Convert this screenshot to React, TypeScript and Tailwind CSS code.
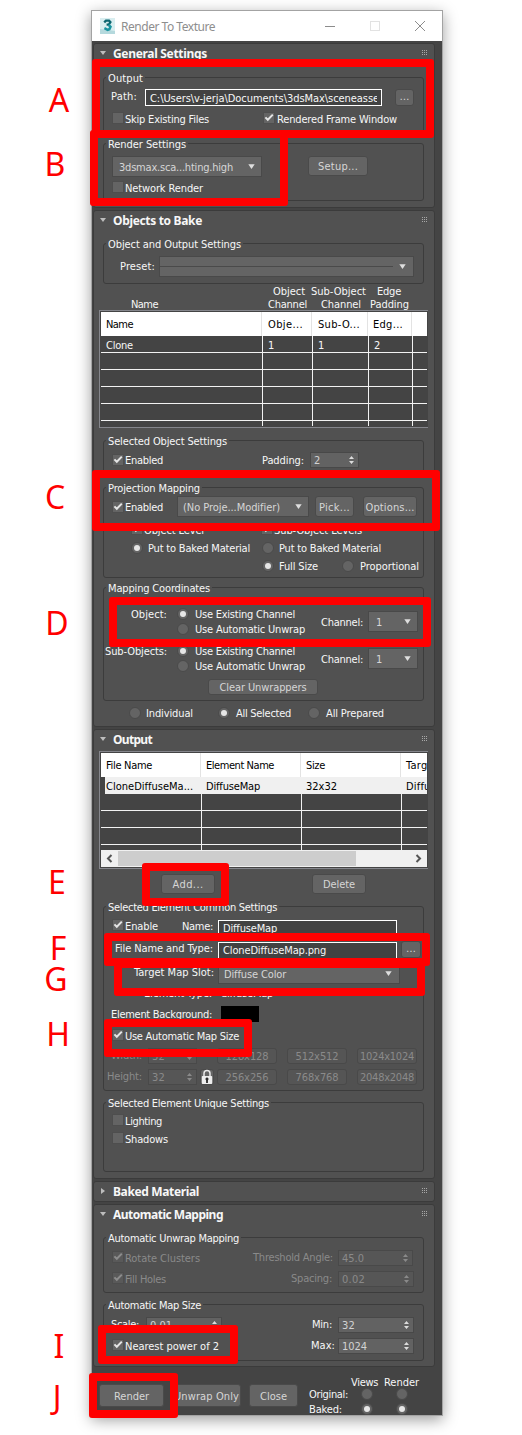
import { useLayoutEffect, useRef, type ReactNode } from "react";

/* Text that spreads its letters evenly over the width of its box. */
function T({ c = "", children }: { c?: string; children: string }) {
  const box = useRef<HTMLSpanElement>(null);
  const ink = useRef<HTMLSpanElement>(null);
  useLayoutEffect(() => {
    if (!box.current || !ink.current) return;
    ink.current.style.letterSpacing = "0px";
    const gap = box.current.getBoundingClientRect().width - ink.current.getBoundingClientRect().width;
    ink.current.style.letterSpacing = `${gap / children.length}px`;
  }, [children]);
  return (
    <span ref={box} className={`block h-[14px] shrink-0 whitespace-nowrap leading-[16px] ${c}`}>
      <span ref={ink} className="inline-block">{children}</span>
    </span>
  );
}

function Row({ c, children }: { c: string; children: ReactNode }) {
  return <div className={`flex shrink-0 items-start ${c}`}>{children}</div>;
}

function Check({ c = "", on, off }: { c?: string; on?: boolean; off?: boolean }) {
  return (
    <span className={`flex size-[12px] shrink-0 items-center justify-center border ${off ? "border-[#4d4d4d] bg-[#595959]" : "border-[#4e4e4e] bg-[#646464]"} ${c}`}>
      {on && (
        <svg width="10" height="10" viewBox="0 0 10 10" className="shrink-0">
          <path d="M1.4 4.4 L3.8 6.8 L8.8 1.6" fill="none" stroke={off ? "#8c8c8c" : "#e4e4e4"} strokeWidth="2" />
        </svg>
      )}
    </span>
  );
}

function Radio({ c = "", on }: { c?: string; on?: boolean }) {
  return (
    <span className={`flex size-[12px] shrink-0 items-center justify-center rounded-full border border-[#4a4a4a] bg-[#646464] ${c}`}>
      {on && <span className="size-[6px] rounded-full bg-[#e6e6e6]" />}
    </span>
  );
}

function Caret() {
  return (
    <svg width="7" height="5" viewBox="0 0 7 5" className="shrink-0">
      <path d="M0.3 0.3 H6.7 L3.5 5 Z" fill="#dedede" />
    </svg>
  );
}

function Drop({ c, children }: { c: string; children?: ReactNode }) {
  return (
    <span className={`flex h-[21px] shrink-0 items-center justify-between border border-[#494949] bg-[#646464] text-[#d6d6d6] ${c}`}>
      {children}
      <Caret />
    </span>
  );
}

function Spin({ c, off, children }: { c: string; off?: boolean; children: ReactNode }) {
  return (
    <span className={`flex h-[16px] shrink-0 items-center justify-between border pl-[3px] pr-[4px] ${off ? "border-[#494949] bg-[#565656] text-[#8a8a8a]" : "border-[#484848] bg-[#626262] text-[#d2d2d2]"} ${c}`}>
      {children}
      <svg width="5" height="8" viewBox="0 0 5 8" className="shrink-0">
        <path d="M0 3 L2.5 0 L5 3 Z M0 5 L2.5 8 L5 5 Z" fill={off ? "#8a8a8a" : "#dcdcdc"} />
      </svg>
    </span>
  );
}

function Btn({ c, off, children }: { c: string; off?: boolean; children: ReactNode }) {
  return (
    <span className={`flex shrink-0 items-center justify-center rounded-[3px] border ${off ? "border-[#494949] bg-[#555555] text-[#8a8a8a]" : "border-[#4a4a4a] bg-[#646464] text-[#d6d6d6]"} ${c}`}>
      {children}
    </span>
  );
}

function Field({ c, children }: { c: string; children: ReactNode }) {
  return (
    <span className={`flex h-[17px] shrink-0 overflow-hidden border border-white bg-[#424242] pl-[4px] ${c}`}>
      {children}
    </span>
  );
}

function Group({ c, title, w, children }: { c: string; title: string; w: string; children?: ReactNode }) {
  return (
    <div className={`ml-[9px] flex w-[321px] shrink-0 flex-col rounded-[3px] border border-[#3c3c3c] ${c}`}>
      <div className="-mt-[7px] ml-[2px] h-[14px] w-fit shrink-0 bg-[#515151] px-[2px]">
        <T c={w}>{title}</T>
      </div>
      {children}
    </div>
  );
}

function Panel({ c, title, w, closed, children }: { c: string; title: string; w: string; closed?: boolean; children?: ReactNode }) {
  return (
    <section className={`flex w-[342px] shrink-0 flex-col overflow-hidden rounded-[3px] border border-[#3b3b3b] bg-[#515151] ${c}`}>
      <div className="flex h-[19px] shrink-0 items-start">
        <svg width="6" height="6" viewBox="0 0 6 6" className="ml-[6px] mt-[6px] shrink-0">
          <path d={closed ? "M1 0 L5 3 L1 6 Z" : "M0 1 H6 L3 5 Z"} fill="#bdbdbd" />
        </svg>
        <T c={`ml-[7px] mt-[2px] font-['Noto_Sans',sans-serif] text-[12px] font-bold [font-stretch:normal] ${w}`}>{title}</T>
        <svg width="5" height="5" viewBox="0 0 5 5" className="ml-auto mr-[7px] mt-[6px] shrink-0">
          {[0, 2, 4].map((y) => [0, 2, 4].map((x) => <rect key={`${x}${y}`} x={x} y={y} width="1" height="1" fill="#a8a8a8" />))}
        </svg>
      </div>
      {children}
    </section>
  );
}

const frames = [
  "left-[92px] top-[59px] w-[342px] h-[79px]",
  "left-[90px] top-[130px] w-[198px] h-[76px]",
  "left-[92px] top-[470px] w-[348px] h-[61px]",
  "left-[109px] top-[597px] w-[322px] h-[50px]",
  "left-[142px] top-[863px] w-[87px] h-[43px]",
  "left-[104px] top-[933px] w-[326px] h-[33px]",
  "left-[114px] top-[960px] w-[311px] h-[36px]",
  "left-[104px] top-[1019px] w-[148px] h-[38px]",
  "left-[98px] top-[1325px] w-[140px] h-[39px]",
  "left-[89px] top-[1373px] w-[89px] h-[45px]",
];

const letters: [string, string][] = [
  ["A", "left-[39px] top-[85px]"],
  ["B", "left-[35px] top-[149px]"],
  ["C", "left-[35px] top-[482px]"],
  ["D", "left-[37px] top-[608px]"],
  ["E", "left-[37px] top-[867px]"],
  ["F", "left-[38px] top-[933px]"],
  ["G", "left-[36px] top-[964px]"],
  ["H", "left-[38px] top-[1019px]"],
  ["I", "left-[39px] top-[1331px]"],
  ["J", "left-[37px] top-[1382px]"],
];

function MapCoord({ label, w, ml, c }: { label: string; w: string; ml: string; c: string }) {
  return (
    <Row c={c}>
      <T c={`mt-[1px] ${ml} ${w}`}>{label}</T>
      <div className="ml-[10px] w-[144px]">
        <Row c="h-[15px]"><Radio c="mt-[2px]" on /><T c="ml-[6px] mt-[1px] w-[100px]">Use Existing Channel</T></Row>
        <Row c="h-[15px]"><Radio c="mt-[2px]" /><T c="ml-[6px] mt-[1px] w-[110px]">Use Automatic Unwrap</T></Row>
      </div>
      <T c="mt-[9px] w-[42px]">Channel:</T>
      <Drop c="ml-[5px] mt-[5px] w-[50px] pl-[7px] pr-[6px]"><T c="w-[7px]">1</T></Drop>
    </Row>
  );
}

export default function App() {
  return (
    <div className="relative h-[1435px] w-[522px] overflow-hidden bg-white pl-[91px] pt-[10px] font-['DejaVu_Sans_Condensed','DejaVu_Sans',sans-serif] text-[11px] text-[#f7f7f7] [font-stretch:condensed]">
      <div className="flex h-[1406px] w-[352px] flex-col overflow-hidden border border-[#a3a3a3] bg-[#444444] shadow-[0_4px_14px_rgba(0,0,0,0.38)]">
        <header className="flex h-[30px] shrink-0 items-center bg-white font-['Noto_Sans',sans-serif] text-[12px] text-[#8e8e8e] [font-stretch:normal]">
          <svg width="15" height="16" viewBox="0 0 15 16" className="ml-[8px] shrink-0">
            <path d="M0 0 H15 V16 H0 Z" fill="#d9eef0" />
            <path d="M0 11 L15 13 V16 H0 Z" fill="#b5d9dd" />
            <path d="M4.2 4.4 L6 2.6 H9 L10.4 4.2 L8.8 6.6 H6.6" fill="none" stroke="#0c6670" strokeWidth="2.3" />
            <path d="M8.6 6.8 L10.5 8.8 L9.4 11.2 L7.6 11.8 L4.4 10.2" fill="none" stroke="#1a94a0" strokeWidth="2.5" />
          </svg>
          <T c="ml-[6px] w-[94px]">Render To Texture</T>
          <svg width="100" height="12" viewBox="0 0 100 12" className="ml-auto mr-[17px] shrink-0">
            <path d="M0 6.5 H10" stroke="#8c8c8c" />
            <rect x="45.5" y="1.5" width="9" height="9" fill="none" stroke="#e2e2e2" />
            <path d="M90 1 L100 11 M100 1 L90 11" stroke="#8c8c8c" />
          </svg>
        </header>

        <main className="ml-[1px] flex shrink-0 flex-col">
          <Panel c="mt-[2px] h-[165px]" title="General Settings" w="w-[94px]">
            <Group c="mt-[14px] h-[57px]" title="Output" w="w-[35px]">
              <Row c="mt-[4px] h-[22px]">
                <T c="ml-[7px] w-[26px]">Path:</T>
                <Field c="ml-[8px] w-[237px] pt-[1px]">
                  <div className="flex w-[227px] overflow-hidden">
                    <T c="w-[223px]">{"C:\\Users\\v-jerja\\Documents\\3dsMax\\sceneass"}</T><span className="leading-[16px]">e</span>
                  </div>
                </Field>
                <Btn c="ml-[13px] h-[17px] w-[19px]">…</Btn>
              </Row>
              <Row c="h-[16px]">
                <Check c="ml-[8px] mt-[1px]" /><T c="ml-[1px] mt-[1px] w-[84px]">Skip Existing Files</T>
                <Check c="ml-[54px] mt-[1px]" on /><T c="ml-[2px] mt-[1px] w-[120px]">Rendered Frame Window</T>
              </Row>
            </Group>
            <Group c="mt-[9px] h-[58px]" title="Render Settings" w="w-[78px]">
              <Row c="mt-[5px] h-[25px]">
                <Drop c="ml-[8px] w-[150px] pl-[6px] pr-[6px]"><T c="w-[114px]">3dsmax.sca...hting.high</T></Drop>
                <Btn c="ml-[46px] h-[20px] w-[60px]"><T c="w-[40px]">Setup...</T></Btn>
              </Row>
              <Row c="h-[14px]"><Check c="ml-[8px]" /><T c="ml-[1px] w-[78px]">Network Render</T></Row>
            </Group>
          </Panel>

          <Panel c="mt-[2px] h-[517px]" title="Objects to Bake" w="w-[89px]">
            <Group c="mt-[13px] h-[41px]" title="Object and Output Settings" w="w-[133px]">
              <Row c="mt-[5px] h-[21px]">
                <T c="ml-[16px] mt-[3px] w-[35px]">Preset:</T>
                <Drop c="ml-[4px] w-[255px] pr-[7px]"><span className="h-px w-[233px] bg-[#4a4a4a]" /></Drop>
              </Row>
            </Group>
            <Row c="h-[12px]">
              <T c="ml-[179px] w-[32px]">Object</T><T c="ml-[6px] w-[55px]">Sub-Object</T><T c="ml-[11px] w-[24px]">Edge</T>
            </Row>
            <Row c="h-[14px]">
              <T c="ml-[37px] mt-[1px] w-[27px]">Name</T><T c="ml-[110px] mt-[1px] w-[39px]">Channel</T>
              <T c="ml-[14px] mt-[1px] w-[40px]">Channel</T><T c="ml-[9px] mt-[1px] w-[39px]">Padding</T>
            </Row>
            <div className="ml-[5px] flex h-[118px] w-[329px] shrink-0 flex-col border border-r-0 border-[#85868c] bg-[#444444] pl-[1px] pr-[1px] pt-[1px]">
              <div className="flex h-[24px] w-[326px] shrink-0 bg-white text-black">
                <div className="w-[161px] border-r border-[#e3e3e3] pl-[5px] pt-[5px]"><T c="w-[27px]">Name</T></div>
                <div className="w-[50px] border-r border-[#e3e3e3] pl-[6px] pt-[5px]"><T c="w-[35px]">Obje...</T></div>
                <div className="w-[56px] border-r border-[#e3e3e3] pl-[6px] pt-[5px]"><T c="w-[42px]">Sub-O...</T></div>
                <div className="w-[44px] border-r border-[#e3e3e3] pl-[5px] pt-[5px]"><T c="w-[30px]">Edg...</T></div>
              </div>
              {[["Clone", "1", "1", "2"], [], [], [], []].map((r, i) => (
                <div key={i} className="flex h-[17px] w-[326px] shrink-0 border-b border-[#f2f2f2]">
                  <div className="w-[162px] border-r border-[#f2f2f2] pl-[5px] pt-[2px]">{r[0] && <T c="w-[27px]">{r[0]}</T>}</div>
                  <div className="w-[50px] border-r border-[#f2f2f2] pl-[5px] pt-[2px]">{r[1] && <T c="w-[7px]">{r[1]}</T>}</div>
                  <div className="w-[56px] border-r border-[#f2f2f2] pl-[5px] pt-[2px]">{r[2] && <T c="w-[7px]">{r[2]}</T>}</div>
                  <div className="w-[44px] border-r border-[#f2f2f2] pl-[5px] pt-[2px]">{r[3] && <T c="w-[7px]">{r[3]}</T>}</div>
                </div>
              ))}
              <div className="flex h-[5px] w-[326px] shrink-0">
                <div className="w-[162px] border-r border-[#f2f2f2]" /><div className="w-[50px] border-r border-[#f2f2f2]" />
                <div className="w-[56px] border-r border-[#f2f2f2]" /><div className="w-[44px] border-r border-[#f2f2f2]" />
              </div>
            </div>
            <Group c="mt-[12px] h-[35px]" title="Selected Object Settings" w="w-[119px]">
              <Row c="mt-[4px] h-[18px]">
                <Check c="ml-[8px] mt-[2px]" on /><T c="ml-[1px] mt-[1px] w-[38px]">Enabled</T>
                <T c="ml-[99px] mt-[1px] w-[42px]">Padding:</T><Spin c="ml-[6px] w-[49px]"><T c="w-[7px]">2</T></Spin>
              </Row>
            </Group>
            <Group c="mt-[12px] h-[91px]" title="Projection Mapping" w="w-[92px]">
              <Row c="mt-[1px] h-[27px]">
                <Check c="ml-[8px] mt-[5px]" on /><T c="ml-[1px] mt-[4px] w-[38px]">Enabled</T>
                <Drop c="ml-[14px] w-[132px] pl-[5px] pr-[6px]"><T c="w-[97px]">(No Proje...Modifier)</T></Drop>
                <Btn c="ml-[6px] h-[21px] w-[39px]"><T c="w-[31px]">Pick...</T></Btn>
                <Btn c="ml-[9px] h-[21px] w-[54px]"><T c="w-[49px]">Options...</T></Btn>
              </Row>
              <Row c="h-[18px]">
                <Check c="ml-[27px]" on /><T c="ml-[1px] w-[60px]">Object Level</T>
                <Check c="ml-[57px]" on /><T c="ml-[1px] w-[88px]">Sub-Object Levels</T>
              </Row>
              <Row c="h-[18px]">
                <Radio c="ml-[27px] mt-[1px]" on /><T c="ml-[5px] w-[102px]">Put to Baked Material</T>
                <Radio c="ml-[12px] mt-[1px]" /><T c="ml-[5px] w-[102px]">Put to Baked Material</T>
              </Row>
              <Row c="h-[14px]">
                <Radio c="ml-[158px] mt-[1px]" on /><T c="ml-[5px] w-[39px]">Full Size</T>
                <Radio c="ml-[24px] mt-[1px]" /><T c="ml-[6px] w-[59px]">Proportional</T>
              </Row>
            </Group>
            <Group c="mt-[9px] h-[114px]" title="Mapping Coordinates" w="w-[102px]">
              <MapCoord c="mt-[11px] h-[37px]" label="Object:" ml="ml-[27px]" w="w-[36px]" />
              <MapCoord c="h-[36px]" label="Sub-Objects:" ml="ml-[1px]" w="w-[62px]" />
              <Row c="h-[16px]"><Btn c="ml-[104px] h-[16px] w-[110px]"><T c="w-[87px]">Clear Unwrappers</T></Btn></Row>
            </Group>
            <Row c="mt-[5px] h-[14px]">
              <Radio c="ml-[35px] mt-[1px]" /><T c="ml-[5px] w-[47px]">Individual</T>
              <Radio c="ml-[25px] mt-[1px]" on /><T c="ml-[6px] w-[55px]">All Selected</T>
              <Radio c="ml-[17px] mt-[1px]" /><T c="ml-[6px] w-[58px]">All Prepared</T>
            </Row>
          </Panel>

          <Panel c="mt-[2px] h-[450px]" title="Output" w="w-[39px]">
            <div className="ml-[5px] mt-[2px] flex h-[118px] w-[329px] shrink-0 flex-col border border-r-0 border-[#85868c] bg-[#444444] pl-[1px] pr-[1px] pt-[1px]">
              <div className="flex h-[24px] w-[326px] shrink-0 overflow-hidden bg-white text-black">
                <div className="w-[100px] shrink-0 border-r border-[#e3e3e3] pl-[5px] pt-[5px]"><T c="w-[46px]">File Name</T></div>
                <div className="w-[100px] shrink-0 border-r border-[#e3e3e3] pl-[5px] pt-[5px]"><T c="w-[68px]">Element Name</T></div>
                <div className="w-[100px] shrink-0 border-r border-[#e3e3e3] pl-[5px] pt-[5px]"><T c="w-[19px]">Size</T></div>
                <div className="w-[26px] shrink-0 overflow-hidden pl-[5px] pt-[5px]"><T c="w-[32px]">Target</T></div>
              </div>
              <div className="flex h-[17px] w-[326px] shrink-0 overflow-hidden border-l-4 border-[#444444] bg-[#f0f0f0] pt-[2px] text-black">
                <T c="ml-[1px] w-[87px]">CloneDiffuseMa...</T><T c="ml-[13px] w-[54px]">DiffuseMap</T>
                <T c="ml-[46px] w-[31px]">32x32</T><T c="ml-[69px] w-[36px]">Diffuse</T>
              </div>
              {["h-[17px] border-b", "h-[17px] border-b", "h-[17px] border-b", "h-[5px]"].map((h, i) => (
                <div key={i} className={`flex w-[326px] shrink-0 border-[#f2f2f2] ${h}`}>
                  <div className="w-[101px] border-r border-[#f2f2f2]" /><div className="w-[100px] border-r border-[#f2f2f2]" />
                  <div className="w-[100px] border-r border-[#f2f2f2]" />
                </div>
              ))}
              <div className="flex h-[17px] w-[326px] shrink-0 items-center bg-[#f0f0f0]">
                <svg width="17" height="17" viewBox="0 0 17 17" className="shrink-0"><path d="M10.5 5 L7 8.5 L10.5 12" fill="none" stroke="#555" strokeWidth="2" /></svg>
                <span className="h-[15px] w-[238px] bg-[#cdcdcd]" />
                <svg width="17" height="17" viewBox="0 0 17 17" className="ml-auto shrink-0"><path d="M6.5 5 L10 8.5 L6.5 12" fill="none" stroke="#555" strokeWidth="2" /></svg>
              </div>
            </div>
            <Row c="mt-[5px] h-[21px]">
              <Btn c="ml-[67px] h-[20px] w-[54px]"><T c="w-[31px]">Add...</T></Btn>
              <Btn c="ml-[97px] h-[20px] w-[54px]"><T c="w-[32px]">Delete</T></Btn>
            </Row>
            <Group c="mt-[11px] h-[185px]" title="Selected Element Common Settings" w="w-[169px]">
              <Row c="mt-[5px] h-[22px]">
                <Check c="ml-[8px]" on /><T c="ml-[1px] w-[33px]">Enable</T>
                <T c="ml-[24px] w-[31px]">Name:</T>
                <Field c="ml-[5px] mt-[1px] w-[179px]"><T c="w-[54px]">DiffuseMap</T></Field>
              </Row>
              <Row c="h-[23px]">
                <T c="ml-[11px] w-[98px]">File Name and Type:</T>
                <Field c="ml-[5px] mt-[1px] w-[179px]"><T c="w-[103px]">CloneDiffuseMap.png</T></Field>
                <Btn c="ml-[4px] h-[17px] w-[20px]">…</Btn>
              </Row>
              <Row c="h-[22px]">
                <T c="ml-[30px] mt-[1px] w-[80px]">Target Map Slot:</T>
                <Drop c="ml-[4px] -mt-px w-[182px] pl-[5px] pr-[7px]"><T c="mt-[1px] w-[62px]">Diffuse Color</T></Drop>
              </Row>
              <Row c="h-[20px]">
                <T c="ml-[40px] w-[68px]">Element Type:</T><T c="ml-[9px] w-[52px]">diffuseMap</T>
              </Row>
              <Row c="h-[23px]">
                <T c="ml-[7px] mt-[1px] w-[101px]">Element Background:</T><span className="ml-[9px] h-[16px] w-[38px] bg-black" />
              </Row>
              <Row c="h-[19px]"><Check c="ml-[8px]" on /><T c="ml-[1px] w-[114px]">Use Automatic Map Size</T></Row>
              <div className="text-[#8a8a8a]">
                <Row c="h-[21px]">
                  <T c="ml-[7px] w-[31px]">Width:</T>
                  <Spin c="ml-[6px] w-[49px]" off><T c="w-[13px]">32</T></Spin>
                  <Btn c="ml-[20px] h-[16px] w-[60px]" off><T c="w-[43px]">128x128</T></Btn>
                  <Btn c="ml-[10px] h-[16px] w-[60px]" off><T c="w-[43px]">512x512</T></Btn>
                  <Btn c="ml-[10px] h-[16px] w-[60px]" off><T c="w-[54px]">1024x1024</T></Btn>
                </Row>
                <Row c="h-[17px]">
                  <T c="ml-[3px] w-[35px]">Height:</T>
                  <Spin c="ml-[6px] w-[49px]" off><T c="w-[13px]">32</T></Spin>
                  <Btn c="ml-[3px] h-[16px] w-[14px]">
                    <svg width="12" height="16" viewBox="0 0 12 16" className="shrink-0">
                      <path d="M3 8 V4.5 A3 3 0 0 1 9 4.5 V8" fill="none" stroke="#e8e8e8" strokeWidth="1.5" />
                      <rect x="0.8" y="7" width="10.4" height="8" rx="0.8" fill="#ededed" />
                      <path d="M6 8.4 a1.7 1.7 0 0 1 0.9 3 V14 H5.1 V11.4 A1.7 1.7 0 0 1 6 8.4 Z" fill="#2c2c2c" />
                    </svg>
                  </Btn>
                  <Btn c="ml-[3px] h-[16px] w-[60px]" off><T c="w-[43px]">256x256</T></Btn>
                  <Btn c="ml-[10px] h-[16px] w-[60px]" off><T c="w-[43px]">768x768</T></Btn>
                  <Btn c="ml-[10px] h-[16px] w-[60px]" off><T c="w-[54px]">2048x2048</T></Btn>
                </Row>
              </div>
            </Group>
            <Group c="mt-[11px] h-[70px]" title="Selected Element Unique Settings" w="w-[161px]">
              <Row c="mt-[4px] h-[18px]"><Check c="ml-[8px]" /><T c="ml-[1px] w-[37px]">Lighting</T></Row>
              <Row c="h-[18px]"><Check c="ml-[8px]" /><T c="ml-[1px] w-[43px]">Shadows</T></Row>
            </Group>
          </Panel>

          <Panel c="mt-[2px] h-[21px]" title="Baked Material" w="w-[86px]" closed />

          <Panel c="mt-[2px] h-[163px]" title="Automatic Mapping" w="w-[110px]">
            <Group c="mt-[13px] h-[56px]" title="Automatic Unwrap Mapping" w="w-[131px]">
              <div className="text-[#8a8a8a]">
                <Row c="mt-[5px] h-[21px]">
                  <Check c="ml-[8px] mt-[1px]" on off /><T c="ml-[1px] mt-[1px] w-[75px]">Rotate Clusters</T>
                  <T c="ml-[53px] w-[80px]">Threshold Angle:</T><Spin c="ml-[5px] w-[75px]" off><T c="w-[22px]">45.0</T></Spin>
                </Row>
                <Row c="h-[17px]">
                  <Check c="ml-[8px] mt-[1px]" on off /><T c="ml-[1px] mt-[1px] w-[41px]">Fill Holes</T>
                  <T c="ml-[125px] w-[41px]">Spacing:</T><Spin c="ml-[6px] w-[76px]" off><T c="w-[23px]">0.02</T></Spin>
                </Row>
              </div>
            </Group>
            <Group c="mt-[11px] h-[57px]" title="Automatic Map Size" w="w-[93px]">
              <Row c="mt-[5px] h-[21px]">
                <T c="ml-[7px] w-[28px]">Scale:</T><Spin c="ml-[7px] w-[76px]"><T c="w-[22px]">0.01</T></Spin>
                <T c="ml-[90px] w-[20px]">Min:</T><Spin c="ml-[6px] w-[76px]"><T c="w-[13px]">32</T></Spin>
              </Row>
              <Row c="h-[17px]">
                <Check c="ml-[8px] mt-[1px]" on /><T c="ml-[1px] mt-[1px] w-[94px]">Nearest power of 2</T>
                <T c="ml-[92px] w-[24px]">Max:</T><Spin c="ml-[3px] w-[76px]"><T c="w-[25px]">1024</T></Spin>
              </Row>
            </Group>
          </Panel>

          <Row c="mt-[8px] h-[40px]">
            <Btn c="ml-[6px] mt-[9px] h-[23px] w-[65px]"><T c="w-[35px]">Render</T></Btn>
            <Btn c="ml-[8px] mt-[9px] h-[23px] w-[69px]"><T c="w-[65px]">Unwrap Only</T></Btn>
            <Btn c="ml-[8px] mt-[9px] h-[23px] w-[49px]"><T c="w-[27px]">Close</T></Btn>
            <div className="ml-[11px] w-[120px]">
              <Row c="h-[12px]"><T c="ml-[42px] w-[27px]">Views</T><T c="ml-[6px] w-[35px]">Render</T></Row>
              <Row c="h-[15px]"><T c="w-[39px]">Original:</T><Radio c="ml-[13px] mt-[1px]" /><Radio c="ml-[23px] mt-[1px]" /></Row>
              <Row c="h-[14px]"><T c="w-[33px]">Baked:</T><Radio c="ml-[19px] mt-[1px]" on /><Radio c="ml-[23px] mt-[1px]" on /></Row>
            </div>
          </Row>
        </main>
      </div>

      {frames.map((f) => (
        <div key={f} className={`absolute rounded-[3px] border-8 border-[#ff0000] ${f}`} />
      ))}
      {letters.map(([l, p]) => (
        <div key={l} className={`absolute w-[40px] text-center font-['Noto_Sans',sans-serif] text-[32px] leading-[30px] text-[#ff0000] [font-stretch:normal] ${p}`}>{l}</div>
      ))}
    </div>
  );
}
